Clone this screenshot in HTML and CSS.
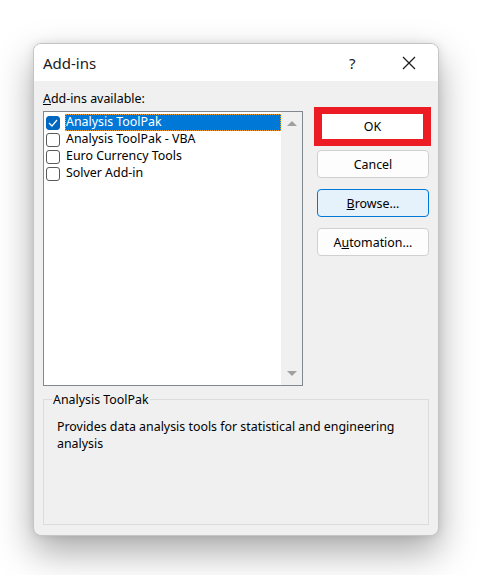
FILE: index.html
```html
<!DOCTYPE html>
<html>
<head>
<meta charset="utf-8">
<link rel="stylesheet" href="styles.css">
</head>
<body>
<div class="stage">
<div class="dialog">
  <div class="titlebar">
    <span class="title">Add-ins</span>
    <span class="help">?</span>
    <span class="close">
      <svg width="14" height="14" viewBox="0 0 14 14"><path d="M1 1 L13 13 M13 1 L1 13" stroke="#1a1a1a" stroke-width="1.2" fill="none"/></svg>
    </span>
  </div>
  <div class="body">
    <div class="left">
      <div class="label"><u>A</u>dd-ins available:</div>
      <div class="listbox">
        <div class="items">
          <div class="item">
            <span class="cb checked"><svg width="10" height="8" viewBox="0 0 10 8"><path d="M1 4 L4 7 L9 1" stroke="#fff" stroke-width="1.2" fill="none"/></svg></span>
            <span class="text sel">Analysis ToolPak</span>
          </div>
          <div class="item"><span class="cb"></span><span class="text">Analysis ToolPak - VBA</span></div>
          <div class="item"><span class="cb"></span><span class="text">Euro Currency Tools</span></div>
          <div class="item"><span class="cb"></span><span class="text">Solver Add-in</span></div>
        </div>
        <div class="scroll">
          <span class="arrow up"></span>
          <span class="arrow down"></span>
        </div>
      </div>
    </div>
    <div class="right">
      <div class="okwrap"><button class="btn ok">OK</button></div>
      <button class="btn">Cancel</button>
      <button class="btn focus"><u>B</u>rowse...</button>
      <button class="btn">A<u>u</u>tomation...</button>
    </div>
    <fieldset class="group">
      <legend>Analysis ToolPak</legend>
      <p>Provides data analysis tools for statistical and engineering analysis</p>
    </fieldset>
  </div>
</div>
</div>
</body>
</html>
```
FILE: styles.css
```css
html, body {
  margin: 0;
  padding: 0;
  background: #ffffff;
  width: 482px;
  height: 588px;
  overflow: hidden;
  font-family: "Noto Sans", "Open Sans", sans-serif;
  font-size: 12.4px;
  color: #000;
}
.stage {
  height: 575px;
  overflow: hidden;
  padding: 43px 0 0 33px;
  box-sizing: border-box;
}
.dialog {
  width: 404px;
  height: 491px;
  border: 1px solid #c4c4c4;
  border-radius: 8px;
  background: #f0f0f0;
  box-shadow: 0 16px 36px rgba(0,0,0,0.34), 0 0 8px rgba(0,0,0,0.10);
  overflow: hidden;
  display: flex;
  flex-direction: column;
}
.titlebar {
  height: 37px;
  background: #fff;
  display: flex;
  align-items: center;
  padding-left: 9px;
  flex: none;
}
.title {
  font-size: 15px;
  flex: 1;
  color: #1a1a1a;
}
.help {
  font-size: 15px;
  width: 20px;
  margin-right: 33px;
  color: #1a1a1a;
}
.close {
  width: 14px;
  height: 14px;
  margin-right: 22px;
  display: flex;
}
.body {
  flex: 1;
  display: grid;
  grid-template-columns: 260px 112px;
  column-gap: 14px;
  grid-template-rows: auto 1fr;
  padding: 9px 9px 10px 9px;
}
.left { display: flex; flex-direction: column; }
.label {
  height: 18px;
  line-height: 18px;
  margin-bottom: 3px;
}
.listbox {
  height: 273px;
  border: 1px solid #828790;
  background: #fff;
  display: flex;
}
.items {
  flex: 1;
  padding-top: 2px;
}
.item {
  display: flex;
  align-items: center;
  height: 17px;
  padding-left: 2px;
}
.cb {
  width: 12px;
  height: 12px;
  border: 1px solid #5a5a5a;
  border-radius: 3px;
  background: #fff;
  margin-right: 5px;
  display: flex;
  align-items: center;
  justify-content: center;
  flex: none;
}
.cb.checked {
  background: #0067c0;
  border-color: #0067c0;
}
.text {
  height: 17px;
  line-height: 16px;
  padding-left: 1px;
}
.text.sel {
  background: #0078d7;
  color: #fff;
  flex: 1;
  outline: 1px dotted #f0a030;
  outline-offset: -1px;
}
.scroll {
  width: 21px;
  background: #f0f0f0;
  display: flex;
  flex-direction: column;
  justify-content: space-between;
  align-items: center;
  padding: 9px 0;
}
.arrow {
  width: 0;
  height: 0;
  border-left: 5px solid transparent;
  border-right: 5px solid transparent;
}
.arrow.up { border-bottom: 5px solid #a0a0a0; }
.arrow.down { border-top: 5px solid #a0a0a0; }
.right {
  display: flex;
  flex-direction: column;
  padding-top: 23px;
}
.okwrap {
  margin: -6px -2px 4px -3px;
  border-style: solid;
  border-color: #ed1c24;
  border-width: 7px 8px;
  height: 25px;
}
.btn {
  font-family: inherit;
  font-size: 12.4px;
  color: #000;
  height: 28px;
  width: 112px;
  border: 1px solid #d0d0d0;
  border-radius: 4px;
  background: #fdfdfd;
  margin-bottom: 11px;
  padding: 0;
}
.btn.ok {
  width: 100%;
  height: 25px;
  border: none;
  border-radius: 0;
  background: #fff;
  margin: 0;
}
.btn.focus {
  background: #e5f1fb;
  border-color: #0078d7;
}
.group {
  grid-column: 1 / 3;
  margin: 5px 0 0 0;
  border: 1px solid #dcdcdc;
  padding: 0 12px;
  min-width: 0;
}
.group legend {
  padding: 0 1px;
  margin-left: -4px;
}
.group p {
  margin: 10px 0 0 1px;
  line-height: 17px;
}
```
